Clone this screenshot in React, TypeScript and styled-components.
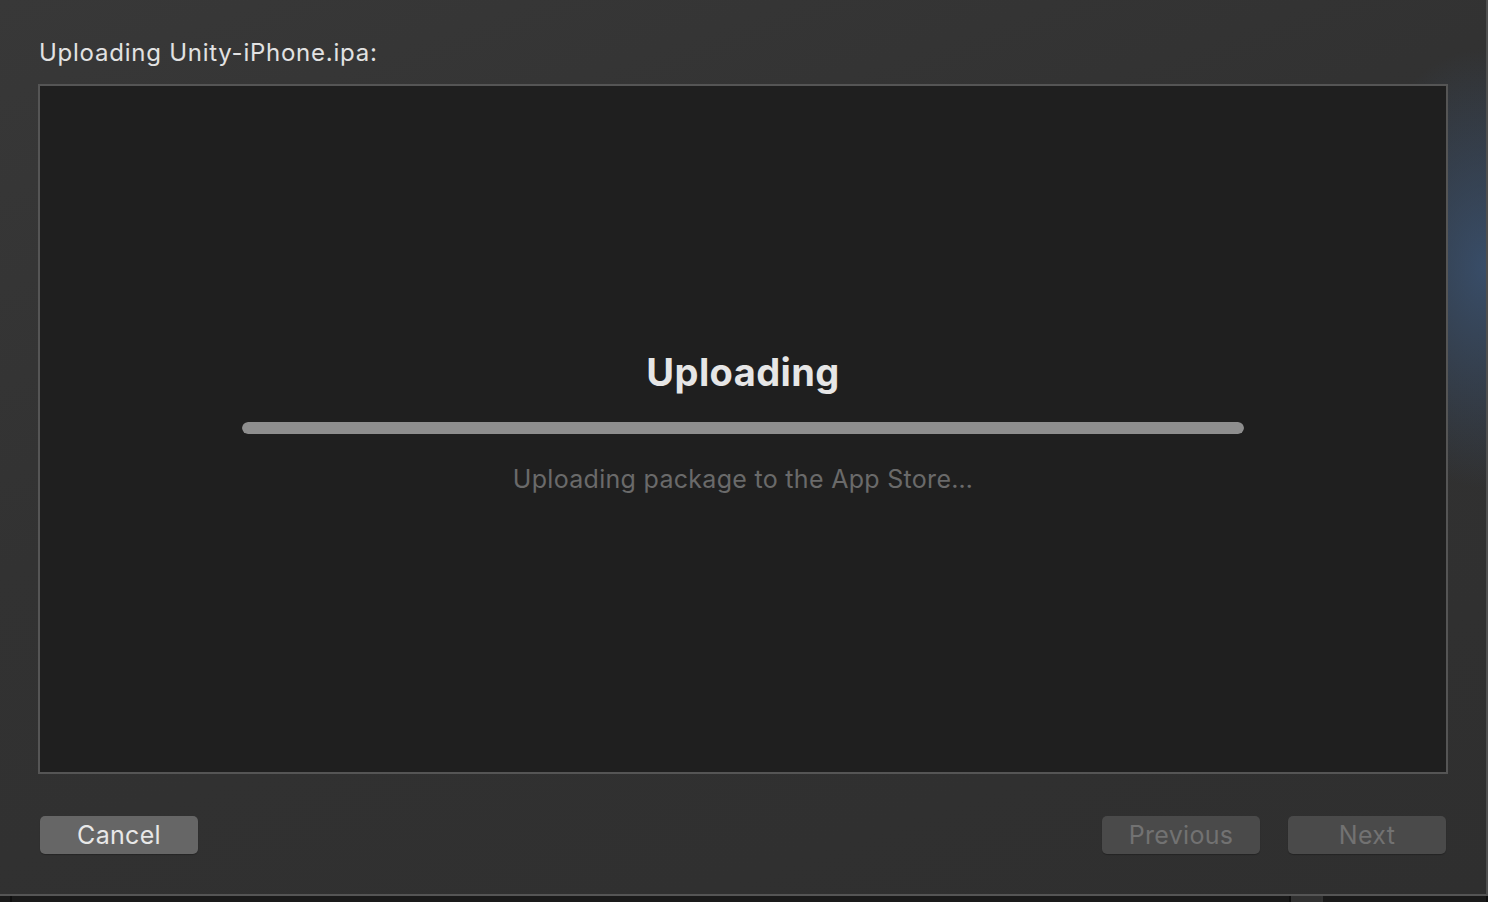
import React from 'react'
import styled, { createGlobalStyle } from 'styled-components'

const Global = createGlobalStyle`
   html, body {
      margin: 0;
      padding: 0;
      background: #1c1c1c;
   }
   body {
      font-family: Inter, 'Liberation Sans', sans-serif;
      -webkit-font-smoothing: antialiased;
   }
`

const App = () => {
   return (
      <>
         <Global />
         <Sheet>
            <Title>Uploading Unity-iPhone.ipa:</Title>
            <Panel>
               <Heading>Uploading</Heading>
               <Progress>
                  <Fill style={{ width: '100%' }} />
               </Progress>
               <Status>Uploading package to the App Store…</Status>
            </Panel>
            <Footer>
               <Button>Cancel</Button>
               <Group>
                  <Button disabled>Previous</Button>
                  <Button disabled>Next</Button>
               </Group>
            </Footer>
         </Sheet>
         <Dock>
            <DockCell w={10} />
            <DockCell w={1282} />
            <DockCell w={30} active />
            <DockCell w={164} />
         </Dock>
      </>
   )
}

const Sheet = styled('div')`
   box-sizing: border-box;
   width: 1488px;
   height: 896px;
   padding: 37px 38px 0 38px;
   display: flex;
   flex-direction: column;
   border-right: 2px solid #4f4f4f;
   border-bottom: 2px solid #555;
   background:
      radial-gradient(ellipse 140px 220px at 100% 30%, rgba(58, 84, 118, 0.8), rgba(58, 84, 118, 0) 100%),
      linear-gradient(160deg, #383838 0%, #323232 40%, #2f2f2f 100%);
`
const Title = styled('div')`
   color: #e2e2e2;
   font-size: 24px;
   letter-spacing: 0.75px;
   line-height: 32px;
   margin-left: 1px;
   margin-bottom: 15px;
`
const Panel = styled('div')`
   box-sizing: border-box;
   height: 690px;
   background: #1f1f1f;
   border: 2px solid #555;
   display: flex;
   flex-direction: column;
   align-items: center;
   justify-content: center;
   padding-bottom: 13px;
`
const Heading = styled('div')`
   color: #e6e6e6;
   font-size: 38px;
   font-weight: 700;
   letter-spacing: 0.4px;
   line-height: 44px;
   margin-bottom: 28px;
`
const Progress = styled('div')`
   width: 1002px;
   height: 12px;
   border-radius: 6px;
   background: #3a3a3a;
   overflow: hidden;
   margin-bottom: 29px;
`
const Fill = styled('div')`
   height: 100%;
   background: #8e8e8e;
   border-radius: 6px;
`
const Status = styled('div')`
   color: #6a6a6a;
   font-size: 25px;
   letter-spacing: 0.3px;
   line-height: 32px;
`
const Footer = styled('div')`
   display: flex;
   justify-content: space-between;
   margin-top: 42px;
   padding: 0 2px;
`
const Group = styled('div')`
   display: flex;
   gap: 28px;
`
const Button = styled('button')`
   box-sizing: border-box;
   width: 158px;
   height: 38px;
   border: none;
   border-radius: 5px;
   font-family: inherit;
   font-size: 25px;
   letter-spacing: 0.3px;
   line-height: 38px;
   padding: 0;
   background: #666;
   color: #e8e8e8;
   box-shadow: 0 1px 1px rgba(0, 0, 0, 0.25);
   &:disabled {
      background: #4a4a4a;
      color: #727272;
   }
`
const Dock = styled('div')`
   display: flex;
   height: 6px;
   background: #1a1a1a;
`
const DockCell = styled('div')<{ w: number; active?: boolean }>`
   width: ${(p) => p.w}px;
   border-right: 2px solid ${(p) => (p.active ? '#333' : '#0f0f0f')};
   background: ${(p) => (p.active ? '#313131' : '#1a1a1a')};
`

export default App
